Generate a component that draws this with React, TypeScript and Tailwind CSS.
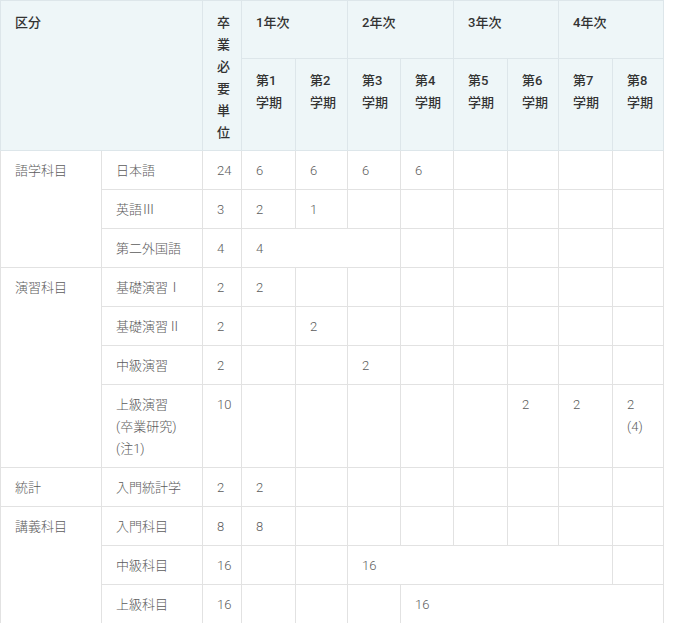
import type { ReactNode } from "react";

type Sem = string | [string, number];

type Row = {
  cat?: string;
  catSpan?: number;
  name: ReactNode;
  total: string;
  sems: Sem[];
};

const rows: Row[] = [
  { cat: "語学科目", catSpan: 3, name: "日本語", total: "24", sems: ["6", "6", "6", "6", "", "", "", ""] },
  { name: "英語Ⅲ", total: "3", sems: ["2", "1", "", "", "", "", "", ""] },
  { name: "第二外国語", total: "4", sems: [["4", 3], "", "", "", "", ""] },
  { cat: "演習科目", catSpan: 4, name: "基礎演習Ⅰ", total: "2", sems: ["2", "", "", "", "", "", "", ""] },
  { name: "基礎演習Ⅱ", total: "2", sems: ["", "2", "", "", "", "", "", ""] },
  { name: "中級演習", total: "2", sems: ["", "", "2", "", "", "", "", ""] },
  {
    name: (
      <>
        上級演習
        <br />
        (卒業研究)
        <br />
        (注1)
      </>
    ),
    total: "10",
    sems: ["", "", "", "", "", "2", "2", "2\n(4)"],
  },
  { cat: "統計", catSpan: 1, name: "入門統計学", total: "2", sems: ["2", "", "", "", "", "", "", ""] },
  { cat: "講義科目", catSpan: 3, name: "入門科目", total: "8", sems: ["8", "", "", "", "", "", "", ""] },
  { name: "中級科目", total: "16", sems: ["", "", ["16", 5], ""] },
  { name: "上級科目", total: "16", sems: ["", "", "", ["16", 5]] },
];

const semWidths = ["w-[54px]", "w-[52px]", "w-[53px]", "w-[53px]", "w-[54px]", "w-[51px]", "w-[54px]", "w-[51px]"];

const th = "border border-[#dde6ea] bg-[#eef6f8] align-top text-left font-medium text-[#333] px-[14px] pt-[11px]";
const td = "border border-[#e2e2e2] align-top text-left font-light text-[#5c5c5c] px-[14px] pt-[9px] pb-[7px]";

export default function App() {
  return (
    <div className="bg-white min-h-screen" style={{ fontFamily: 'Roboto, "Noto Sans CJK JP", sans-serif' }}>
      <table className="table-fixed border-collapse w-[663px] text-[13px] leading-[22px]">
        <colgroup>
          <col className="w-[101px]" />
          <col className="w-[101px]" />
          <col className="w-[39px]" />
          {semWidths.map((w, i) => (
            <col key={i} className={w} />
          ))}
        </colgroup>
        <thead>
          <tr className="h-[58px] border-t border-t-[#f1e6e8]">
            <th rowSpan={2} colSpan={2} className={th}>
              区分
            </th>
            <th rowSpan={2} className={`${th} px-[13px]`}>
              卒<br />業<br />必<br />要<br />単<br />位
            </th>
            {["1年次", "2年次", "3年次", "4年次"].map((y) => (
              <th key={y} colSpan={2} className={th}>
                {y}
              </th>
            ))}
          </tr>
          <tr className="h-[92px]">
            {[1, 2, 3, 4, 5, 6, 7, 8].map((n) => (
              <th key={n} className={`${th} whitespace-nowrap`}>
                第{n}
                <br />
                学期
              </th>
            ))}
          </tr>
        </thead>
        <tbody>
          {rows.map((r, i) => (
            <tr key={i}>
              {r.cat && (
                <td rowSpan={r.catSpan} className={td}>
                  {r.cat}
                </td>
              )}
              <td className={td}>{r.name}</td>
              <td className={`${td} px-[13px]`}>{r.total}</td>
              {r.sems.map((s, j) => {
                const [text, span] = Array.isArray(s) ? s : [s, 1];
                return (
                  <td key={j} colSpan={span} className={`${td} whitespace-pre-line`}>
                    {text}
                  </td>
                );
              })}
            </tr>
          ))}
        </tbody>
      </table>
    </div>
  );
}
